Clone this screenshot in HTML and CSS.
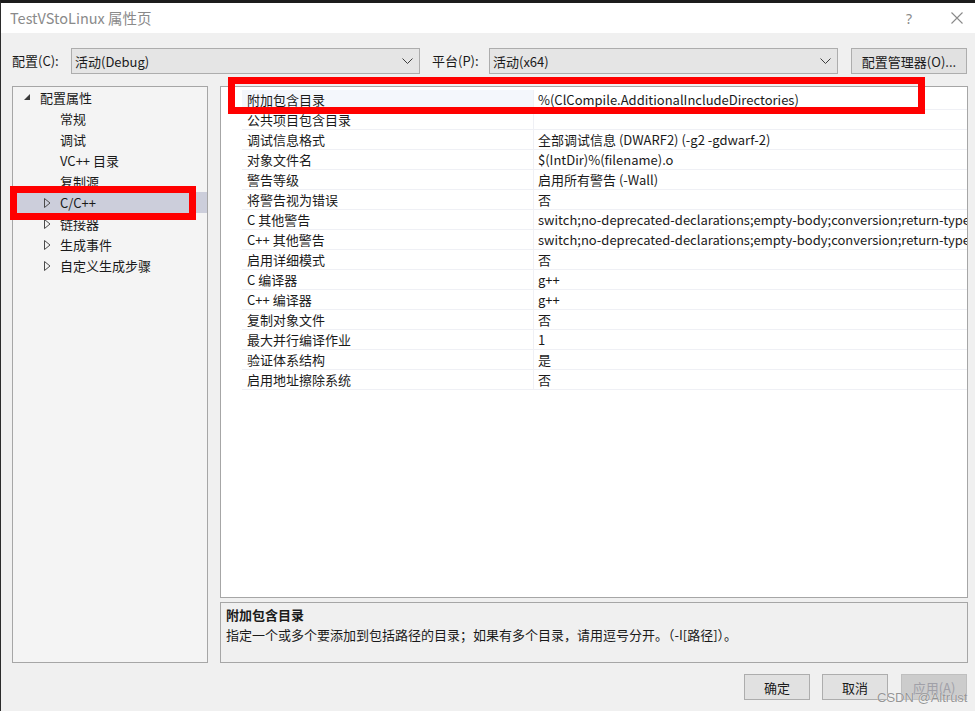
FILE: index.html
```html
<!DOCTYPE html>
<html lang="zh-CN">
<head>
<meta charset="utf-8">
<title>TestVStoLinux 属性页</title>
<link rel="stylesheet" href="styles.css">
</head>
<body>
<div class="window">
  <header class="titlebar">
    <span class="title">TestVStoLinux 属性页</span>
    <div class="controls">
      <span class="help">?</span>
      <svg class="close" width="12" height="12" viewBox="0 0 12 12"><path d="M0.5 0.5 L11.5 11.5 M11.5 0.5 L0.5 11.5" stroke="#8a8a8a" stroke-width="1.1" fill="none"/></svg>
    </div>
  </header>
  <main class="body">
    <div class="toolbar">
      <span class="lbl lbl-config">配置(C):</span>
      <div class="combo"><span class="combo-text">活动(Debug)</span><svg class="chev" width="11" height="6" viewBox="0 0 11 6"><polyline points="0.5,0.5 5.5,5.5 10.5,0.5" stroke="#3c3c3c" stroke-width="1" fill="none"/></svg></div>
      <span class="lbl lbl-platform">平台(P):</span>
      <div class="combo"><span class="combo-text">活动(x64)</span><svg class="chev" width="11" height="6" viewBox="0 0 11 6"><polyline points="0.5,0.5 5.5,5.5 10.5,0.5" stroke="#3c3c3c" stroke-width="1" fill="none"/></svg></div>
      <button class="btn btn-manager">配置管理器(O)...</button>
    </div>
    <div class="content">
      <nav class="tree">
        <div class="item lvl0"><svg class="tw" width="7" height="7" viewBox="0 0 7 7"><polygon points="6,0 6,6 0,6" fill="#3a3a3a"/></svg><span>配置属性</span></div>
        <div class="item leaf">常规</div>
        <div class="item leaf">调试</div>
        <div class="item leaf">VC++ 目录</div>
        <div class="item leaf">复制源</div>
        <div class="item lvl1 selected"><svg class="tw" width="7" height="10" viewBox="0 0 7 10"><polygon points="0.5,0.5 6,5 0.5,9.5" fill="none" stroke="#4a4a4a" stroke-width="1"/></svg><span>C/C++</span></div>
        <div class="item lvl1"><svg class="tw" width="7" height="10" viewBox="0 0 7 10"><polygon points="0.5,0.5 6,5 0.5,9.5" fill="none" stroke="#4a4a4a" stroke-width="1"/></svg><span>链接器</span></div>
        <div class="item lvl1"><svg class="tw" width="7" height="10" viewBox="0 0 7 10"><polygon points="0.5,0.5 6,5 0.5,9.5" fill="none" stroke="#4a4a4a" stroke-width="1"/></svg><span>生成事件</span></div>
        <div class="item lvl1"><svg class="tw" width="7" height="10" viewBox="0 0 7 10"><polygon points="0.5,0.5 6,5 0.5,9.5" fill="none" stroke="#4a4a4a" stroke-width="1"/></svg><span>自定义生成步骤</span></div>
      </nav>
      <div class="right">
        <div class="grid">
          <div class="row current"><span class="gut"></span><span class="name">附加包含目录</span><span class="val">%(ClCompile.AdditionalIncludeDirectories)</span></div>
          <div class="row"><span class="gut"></span><span class="name">公共项目包含目录</span><span class="val"></span></div>
          <div class="row"><span class="gut"></span><span class="name">调试信息格式</span><span class="val">全部调试信息 (DWARF2) (-g2 -gdwarf-2)</span></div>
          <div class="row"><span class="gut"></span><span class="name">对象文件名</span><span class="val">$(IntDir)%(filename).o</span></div>
          <div class="row"><span class="gut"></span><span class="name">警告等级</span><span class="val">启用所有警告 (-Wall)</span></div>
          <div class="row"><span class="gut"></span><span class="name">将警告视为错误</span><span class="val">否</span></div>
          <div class="row"><span class="gut"></span><span class="name">C 其他警告</span><span class="val">switch;no-deprecated-declarations;empty-body;conversion;return-type;parentheses;no-format;uninitialized</span></div>
          <div class="row"><span class="gut"></span><span class="name">C++ 其他警告</span><span class="val">switch;no-deprecated-declarations;empty-body;conversion;return-type;parentheses;no-format;uninitialized</span></div>
          <div class="row"><span class="gut"></span><span class="name">启用详细模式</span><span class="val">否</span></div>
          <div class="row"><span class="gut"></span><span class="name">C 编译器</span><span class="val">g++</span></div>
          <div class="row"><span class="gut"></span><span class="name">C++ 编译器</span><span class="val">g++</span></div>
          <div class="row"><span class="gut"></span><span class="name">复制对象文件</span><span class="val">否</span></div>
          <div class="row"><span class="gut"></span><span class="name">最大并行编译作业</span><span class="val">1</span></div>
          <div class="row"><span class="gut"></span><span class="name">验证体系结构</span><span class="val">是</span></div>
          <div class="row"><span class="gut"></span><span class="name">启用地址擦除系统</span><span class="val">否</span></div>
        </div>
        <div class="desc">
          <div class="desc-title">附加包含目录</div>
          <div class="desc-text">指定一个或多个要添加到包括路径的目录；如果有多个目录，请用逗号分开。（-I[路径]）。</div>
        </div>
      </div>
    </div>
    <div class="footer">
      <button class="btn btn-dlg">确定</button>
      <button class="btn btn-dlg">取消</button>
      <button class="btn btn-dlg disabled">应用(A)</button>
    </div>
  </main>
  <div class="mark mark-row"></div>
  <div class="mark mark-tree"></div>
  <div class="watermark">CSDN @Altrust</div>
</div>
</body>
</html>
```

FILE: styles.css
```css
html, body {
  margin: 0;
  padding: 0;
}
body {
  width: 975px;
  height: 711px;
  overflow: hidden;
  background: #1e1e1e;
  font-family: "Noto Sans CJK SC", sans-serif;
  font-size: 13px;
  color: #1a1a1a;
}
.window {
  position: relative;
  box-sizing: border-box;
  height: 711px;
  border-top: 3px solid #1c1c1c;
  border-left: 1px solid #2b2b2b;
  background: #f0f0f0;
  display: flex;
  flex-direction: column;
}
.titlebar {
  height: 30px;
  background: #ffffff;
  display: flex;
  align-items: center;
  padding-left: 9px;
  padding-right: 12px;
}
.title {
  font-size: 14.5px;
  color: #8a8a8a;
  flex: 1;
  margin-top: -1px;
}
.controls {
  display: flex;
  align-items: center;
  gap: 39px;
}
.help {
  font-family: "Noto Sans", sans-serif;
  font-size: 14px;
  color: #8a8a8a;
}
.close {
  display: block;
}
.body {
  flex: 1;
  padding: 15px 7px 0 11px;
  display: flex;
  flex-direction: column;
}
.toolbar {
  display: flex;
  align-items: center;
  height: 26px;
}
.lbl {
  line-height: 26px;
  flex: none;
}
.lbl-config {
  width: 59px;
}
.lbl-platform {
  width: 57px;
  margin-left: 12px;
}
.combo {
  box-sizing: border-box;
  width: 349px;
  height: 26px;
  flex: none;
  background: #e5e5e5;
  border: 1px solid #adadad;
  display: flex;
  align-items: center;
  padding: 0 3px 0 3px;
}
.combo-text {
  flex: 1;
}
.chev {
  display: block;
  margin-right: 3px;
}
.btn {
  box-sizing: border-box;
  font-family: inherit;
  font-size: 13px;
  color: #1a1a1a;
  background: #e1e1e1;
  border: 1px solid #adadad;
  padding: 0;
  height: 26px;
}
.btn-manager {
  width: 116px;
  margin-left: 13px;
}
.content {
  margin-top: 12px;
  height: 577px;
  display: flex;
  gap: 12px;
}
.tree {
  box-sizing: border-box;
  width: 196px;
  flex: none;
  background: #f4f4f4;
  border: 1px solid #a6a6a6;
}
.item {
  height: 21px;
  line-height: 21px;
  display: flex;
  align-items: center;
  white-space: nowrap;
}
.tw {
  display: block;
  flex: none;
}
.lvl0 {
  padding-left: 11px;
}
.lvl0 .tw {
  margin-right: 9px;
}
.lvl1 {
  padding-left: 31px;
}
.lvl1 .tw {
  margin-right: 9px;
}
.leaf {
  padding-left: 47px;
}
.selected {
  background: #cccedb;
}
.right {
  flex: 1;
  display: flex;
  flex-direction: column;
  gap: 4px;
  min-width: 0;
}
.grid {
  box-sizing: border-box;
  flex: 1;
  background: #ffffff;
  border: 1px solid #a6a6a6;
  padding-top: 3px;
  overflow: hidden;
}
.row {
  display: flex;
  height: 20px;
}
.gut {
  width: 21px;
  flex: none;
}
.name, .val {
  box-sizing: border-box;
  height: 20px;
  line-height: 19px;
  border-bottom: 1px solid #eff0f5;
  white-space: nowrap;
  overflow: hidden;
}
.name {
  width: 291px;
  flex: none;
  padding-left: 5px;
}
.val {
  flex: 1;
  min-width: 0;
  border-left: 1px solid #eff0f5;
  padding-left: 4px;
}
.current .name {
  background: #f4f7fc;
}
.desc {
  box-sizing: border-box;
  height: 61px;
  flex: none;
  background: #f0f0f0;
  border: 1px solid #a6a6a6;
  padding: 2px 5px 0 5px;
  line-height: 20px;
}
.desc-title {
  font-weight: bold;
}
.footer {
  margin-top: 11px;
  display: flex;
  justify-content: flex-end;
  gap: 12px;
  padding-right: 1px;
}
.btn-dlg {
  width: 66px;
}
.btn-dlg.disabled {
  background: #cccccc;
  border-color: #bfbfbf;
  color: #a0a0a8;
  margin-left: 1px;
}
.mark {
  position: absolute;
  box-sizing: border-box;
  border: 7px solid #ff0000;
}
.mark-row {
  left: 227px;
  top: 74px;
  width: 697px;
  height: 37px;
}
.mark-tree {
  left: 9px;
  top: 183px;
  width: 186px;
  height: 34px;
}
.watermark {
  position: absolute;
  left: 876px;
  top: 687px;
  font-family: "Liberation Sans", sans-serif;
  font-size: 13px;
  color: rgba(130, 130, 130, 0.85);
  text-shadow: 0 0 1px #ffffff;
}
```
